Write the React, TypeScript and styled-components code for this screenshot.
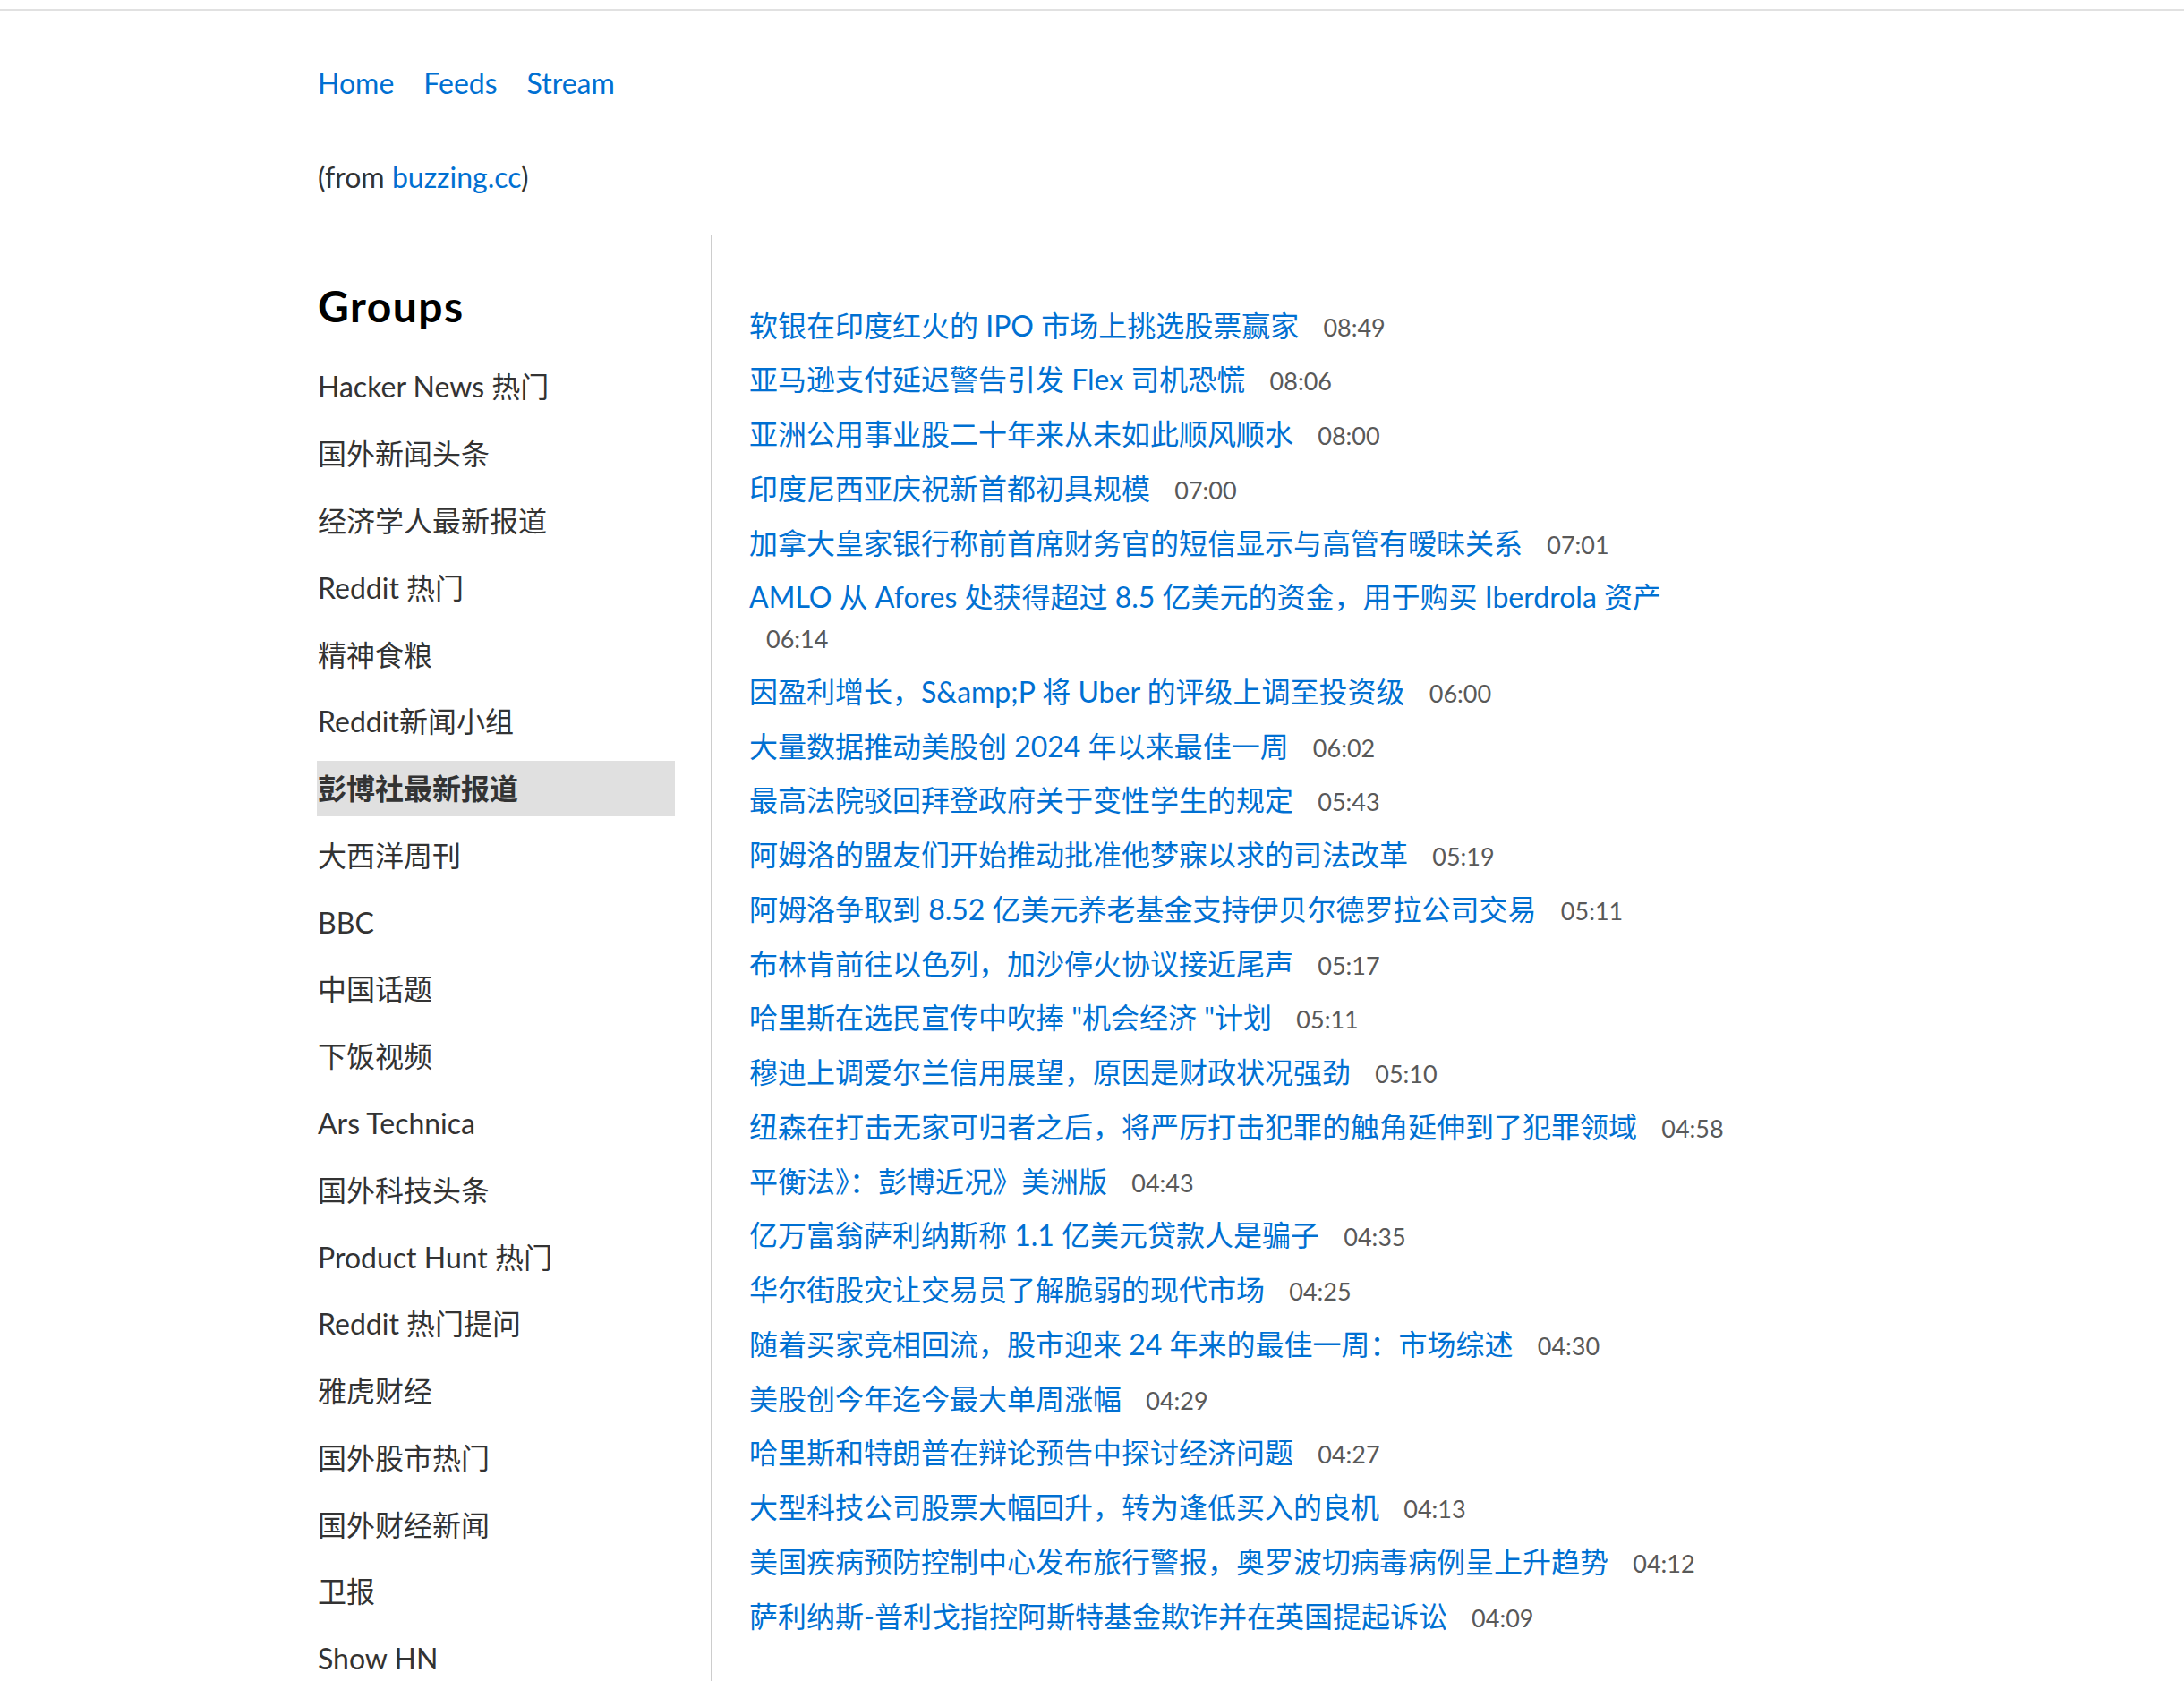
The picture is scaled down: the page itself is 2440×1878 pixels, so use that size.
import React from "react";
import styled, { createGlobalStyle } from "styled-components";

const GlobalStyle = createGlobalStyle`
  html, body {
    margin: 0;
    padding: 0;
    background: #ffffff;
  }
  body {
    font-family: Lato, "Noto Sans CJK SC", "Noto Sans", sans-serif;
    color: #333333;
  }
  a {
    text-decoration: none;
  }
`;

const TopRule = styled.div`
  margin-top: 10px;
  height: 2px;
  background: #e1e1e1;
`;

const Page = styled.div`
  margin-left: 354px;
  width: 1591px;
`;

const Header = styled.header`
  padding-top: 57px;
`;

const Nav = styled.nav`
  display: flex;
  gap: 33px;
  padding-left: 1px;
  font-size: 32px;
  line-height: 48px;
`;

const NavLink = styled.a`
  color: #0070d2;
`;

const Source = styled.p`
  margin: 57px 0 0;
  padding-left: 1px;
  font-size: 32px;
  line-height: 48px;
  color: #333333;
`;

const SourceLink = styled.a`
  color: #0070d2;
`;

const Main = styled.div`
  display: flex;
  margin-top: 40px;
`;

const Sidebar = styled.aside`
  flex: 0 0 400px;
  padding-right: 40px;
  border-right: 2px solid #cdcdcd;
`;

const SidebarTitle = styled.h2`
  margin: 51px 0 30px;
  padding-left: 1px;
  font-size: 48px;
  line-height: 58px;
  font-weight: 700;
  letter-spacing: 1.5px;
  color: #000000;
`;

const GroupList = styled.ul`
  display: flex;
  flex-direction: column;
  gap: 12px;
  margin: 0;
  padding: 0;
  list-style: none;
`;

const GroupLink = styled.a<{ $active?: boolean }>`
  display: block;
  padding: 7.4px 1px;
  font-size: 32px;
  line-height: 48px;
  color: #333333;
  font-weight: ${(p) => (p.$active ? 700 : 400)};
  background: ${(p) => (p.$active ? "#e0e0e0" : "transparent")};
`;

const Content = styled.section`
  flex: 1;
  padding: 79.5px 0 0 41px;
`;

const NewsList = styled.ul`
  margin: 0;
  padding: 0;
  list-style: none;
`;

const NewsItem = styled.li`
  margin-bottom: 16px;
  font-size: 32px;
  line-height: 44.75px;
`;

const NewsLink = styled.a`
  color: #0070d2;
`;

const Time = styled.span`
  margin-left: 19px;
  font-size: 27px;
  line-height: 1;
  color: #595959;
`;

const groups = [
  "Hacker News 热门",
  "国外新闻头条",
  "经济学人最新报道",
  "Reddit 热门",
  "精神食粮",
  "Reddit新闻小组",
  "彭博社最新报道",
  "大西洋周刊",
  "BBC",
  "中国话题",
  "下饭视频",
  "Ars Technica",
  "国外科技头条",
  "Product Hunt 热门",
  "Reddit 热门提问",
  "雅虎财经",
  "国外股市热门",
  "国外财经新闻",
  "卫报",
  "Show HN",
  "Ask HN",
];

const news: [string, string][] = [
  ["软银在印度红火的 IPO 市场上挑选股票赢家", "08:49"],
  ["亚马逊支付延迟警告引发 Flex 司机恐慌", "08:06"],
  ["亚洲公用事业股二十年来从未如此顺风顺水", "08:00"],
  ["印度尼西亚庆祝新首都初具规模", "07:00"],
  ["加拿大皇家银行称前首席财务官的短信显示与高管有暧昧关系", "07:01"],
  ["AMLO 从 Afores 处获得超过 8.5 亿美元的资金，用于购买 Iberdrola 资产", "06:14"],
  ["因盈利增长，S&amp;P 将 Uber 的评级上调至投资级", "06:00"],
  ["大量数据推动美股创 2024 年以来最佳一周", "06:02"],
  ["最高法院驳回拜登政府关于变性学生的规定", "05:43"],
  ["阿姆洛的盟友们开始推动批准他梦寐以求的司法改革", "05:19"],
  ["阿姆洛争取到 8.52 亿美元养老基金支持伊贝尔德罗拉公司交易", "05:11"],
  ["布林肯前往以色列，加沙停火协议接近尾声", "05:17"],
  ["哈里斯在选民宣传中吹捧 \"机会经济 \"计划", "05:11"],
  ["穆迪上调爱尔兰信用展望，原因是财政状况强劲", "05:10"],
  ["纽森在打击无家可归者之后，将严厉打击犯罪的触角延伸到了犯罪领域", "04:58"],
  ["平衡法》：彭博近况》美洲版", "04:43"],
  ["亿万富翁萨利纳斯称 1.1 亿美元贷款人是骗子", "04:35"],
  ["华尔街股灾让交易员了解脆弱的现代市场", "04:25"],
  ["随着买家竞相回流，股市迎来 24 年来的最佳一周：市场综述", "04:30"],
  ["美股创今年迄今最大单周涨幅", "04:29"],
  ["哈里斯和特朗普在辩论预告中探讨经济问题", "04:27"],
  ["大型科技公司股票大幅回升，转为逢低买入的良机", "04:13"],
  ["美国疾病预防控制中心发布旅行警报，奥罗波切病毒病例呈上升趋势", "04:12"],
  ["萨利纳斯-普利戈指控阿斯特基金欺诈并在英国提起诉讼", "04:09"],
];

export default function App() {
  return (
    <>
      <GlobalStyle />
      <TopRule />
      <Page>
        <Header>
          <Nav>
            <NavLink href="#">Home</NavLink>
            <NavLink href="#">Feeds</NavLink>
            <NavLink href="#">Stream</NavLink>
          </Nav>
          <Source>
            (from <SourceLink href="#">buzzing.cc</SourceLink>)
          </Source>
        </Header>
        <Main>
          <Sidebar>
            <SidebarTitle>Groups</SidebarTitle>
            <GroupList>
              {groups.map((g) => (
                <li key={g}>
                  <GroupLink href="#" $active={g === "彭博社最新报道"}>
                    {g}
                  </GroupLink>
                </li>
              ))}
            </GroupList>
          </Sidebar>
          <Content>
            <NewsList>
              {news.map(([title, time], i) => (
                <NewsItem key={i}>
                  <NewsLink href="#">{title}</NewsLink>{" "}
                  <Time>{time}</Time>
                </NewsItem>
              ))}
            </NewsList>
          </Content>
        </Main>
      </Page>
    </>
  );
}
